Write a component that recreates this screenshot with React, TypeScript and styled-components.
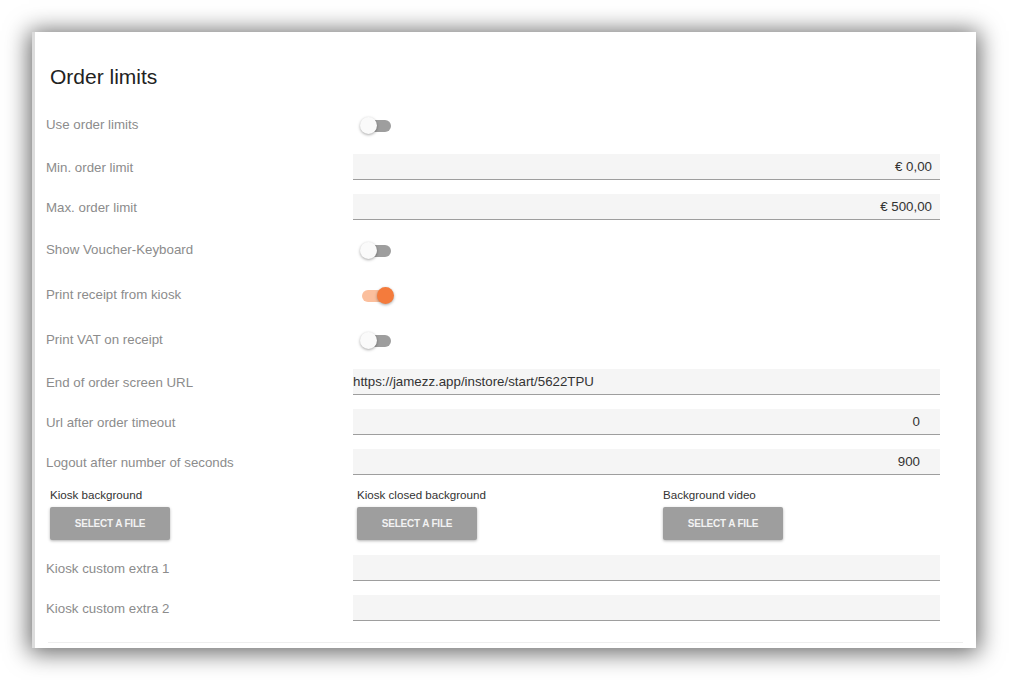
import React, { useState } from 'react';
import styled, { createGlobalStyle } from 'styled-components';

const GlobalStyle = createGlobalStyle`
  * { box-sizing: border-box; }
  body {
    margin: 0;
    background: #fff;
    font-family: 'Liberation Sans', Arial, sans-serif;
  }
`;

const Page = styled.div`
  width: 1009px;
  height: 680px;
  padding: 32px 0 0 32px;
  overflow: hidden;
`;

const Card = styled.section`
  width: 944px;
  height: 616px;
  background: #fff;
  border-left: 3px solid #dcdcdc;
  box-shadow: 0 2px 22px 3px rgba(0, 0, 0, 0.6);
  padding: 0 36px 0 11px;
  display: flex;
  flex-direction: column;
`;

const Title = styled.h2`
  height: 70px;
  margin: 0;
  padding: 33px 0 0 4px;
  font-size: 21px;
  font-weight: 400;
  line-height: 24px;
  color: #222;
`;

const Row = styled.div<{ $h: number }>`
  height: ${({ $h }) => $h}px;
  display: grid;
  grid-template-columns: 307px 1fr;
  align-items: center;
`;

const Label = styled.label`
  font-size: 13.3px;
  color: #8c8c8c;
`;

const Field = styled.div<{ $align?: 'left' | 'right'; $pr?: number }>`
  height: 26px;
  background: #f5f5f5;
  border-bottom: 1px solid #9e9e9e;
  display: flex;
  align-items: center;
  justify-content: ${({ $align }) => ($align === 'left' ? 'flex-start' : 'flex-end')};
  padding-right: ${({ $pr }) => $pr ?? 8}px;
  font-size: 13.3px;
  color: #333;
`;

const SwitchCell = styled.div`
  display: flex;
  align-items: center;
  padding-top: 2px;
`;

const SwitchBox = styled.button<{ $on: boolean }>`
  position: relative;
  width: 34px;
  height: 17px;
  margin-left: 7px;
  padding: 0;
  border: 0;
  background: transparent;
  cursor: pointer;

  &::before {
    content: '';
    position: absolute;
    left: 2px;
    top: 2.5px;
    width: 29px;
    height: 12px;
    border-radius: 6px;
    background: ${({ $on }) => ($on ? '#fbbf9d' : '#9e9e9e')};
  }

  &::after {
    content: '';
    position: absolute;
    top: 0;
    left: ${({ $on }) => ($on ? '17px' : '0')};
    width: 17px;
    height: 17px;
    border-radius: 50%;
    background: ${({ $on }) => ($on ? '#f47b3c' : '#fafafa')};
    box-shadow: 0 1px 3px rgba(0, 0, 0, 0.35);
  }
`;

const Files = styled.div`
  height: 66px;
  padding: 6px 0 0 4px;
  display: grid;
  grid-template-columns: 307px 306px 1fr;
`;

const FileCol = styled.div`
  display: flex;
  flex-direction: column;
  align-items: flex-start;
`;

const FileLabel = styled.span`
  font-size: 11.6px;
  line-height: 14px;
  color: #333;
  margin-bottom: 5px;
`;

const FileButton = styled.button`
  width: 120px;
  height: 33px;
  border: 0;
  border-radius: 2px;
  background: #9e9e9e;
  color: #f2f2f2;
  font-family: 'Liberation Sans', Arial, sans-serif;
  font-size: 10px;
  font-weight: 700;
  letter-spacing: -0.2px;
  box-shadow: 0 1px 3px rgba(0, 0, 0, 0.3);
  cursor: pointer;
`;

const Divider = styled.hr`
  margin: 14px -23px 0 2px;
  border: 0;
  border-top: 1px solid #eeeeee;
`;

const Toggle = ({ initial }: { initial: boolean }) => {
  const [on, setOn] = useState(initial);
  return (
    <SwitchCell>
      <SwitchBox $on={on} onClick={() => setOn(!on)} aria-pressed={on} />
    </SwitchCell>
  );
};

export default function App() {
  return (
    <Page>
      <GlobalStyle />
      <Card>
        <Title>Order limits</Title>
        <Row $h={45}>
          <Label>Use order limits</Label>
          <Toggle initial={false} />
        </Row>
        <Row $h={40}>
          <Label>Min. order limit</Label>
          <Field>€ 0,00</Field>
        </Row>
        <Row $h={40}>
          <Label>Max. order limit</Label>
          <Field>€ 500,00</Field>
        </Row>
        <Row $h={45}>
          <Label>Show Voucher-Keyboard</Label>
          <Toggle initial={false} />
        </Row>
        <Row $h={45}>
          <Label>Print receipt from kiosk</Label>
          <Toggle initial={true} />
        </Row>
        <Row $h={45}>
          <Label>Print VAT on receipt</Label>
          <Toggle initial={false} />
        </Row>
        <Row $h={40}>
          <Label>End of order screen URL</Label>
          <Field $align="left">https://jamezz.app/instore/start/5622TPU</Field>
        </Row>
        <Row $h={40}>
          <Label>Url after order timeout</Label>
          <Field $pr={20}>0</Field>
        </Row>
        <Row $h={40}>
          <Label>Logout after number of seconds</Label>
          <Field $pr={20}>900</Field>
        </Row>
        <Files>
          <FileCol>
            <FileLabel>Kiosk background</FileLabel>
            <FileButton>SELECT A FILE</FileButton>
          </FileCol>
          <FileCol>
            <FileLabel>Kiosk closed background</FileLabel>
            <FileButton>SELECT A FILE</FileButton>
          </FileCol>
          <FileCol>
            <FileLabel>Background video</FileLabel>
            <FileButton>SELECT A FILE</FileButton>
          </FileCol>
        </Files>
        <Row $h={40}>
          <Label>Kiosk custom extra 1</Label>
          <Field />
        </Row>
        <Row $h={40}>
          <Label>Kiosk custom extra 2</Label>
          <Field />
        </Row>
        <Divider />
      </Card>
    </Page>
  );
}
